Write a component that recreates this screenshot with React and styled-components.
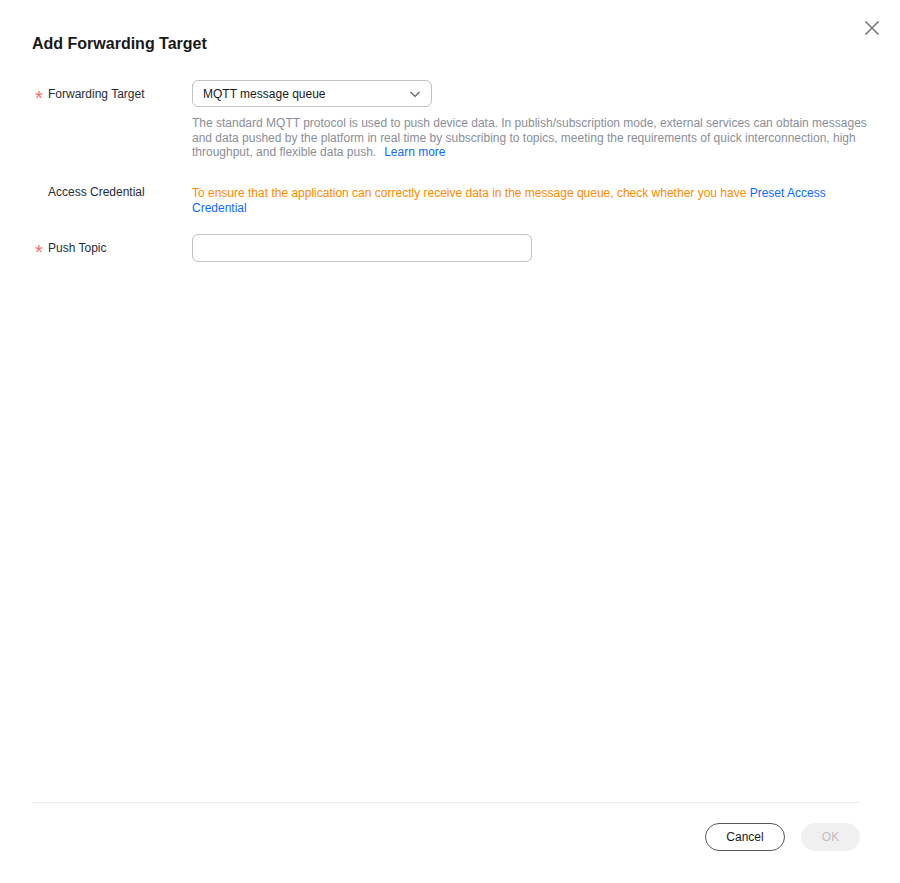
import React from "react";
import styled, { createGlobalStyle } from "styled-components";

const Global = createGlobalStyle`
  html, body { margin: 0; padding: 0; background: #fff; }
  body { font-family: "Liberation Sans", Arial, sans-serif; color: #252b3a; }
  * { box-sizing: border-box; }
`;

const Dialog = styled.div`
  position: relative;
  width: 900px;
  height: 883px;
  display: flex;
  flex-direction: column;
  background: #fff;
`;

const Header = styled.div`
  padding: 35px 32px 0 32px;
  height: 80px;
`;

const Title = styled.h2`
  margin: 0;
  font-size: 16px;
  font-weight: bold;
  color: #191919;
  line-height: 18px;
`;

const CloseBtn = styled.button`
  position: absolute;
  top: 20px;
  right: 20px;
  width: 16px;
  height: 16px;
  padding: 0;
  border: none;
  background: none;
  cursor: pointer;
  display: flex;
  align-items: center;
  justify-content: center;
`;

const Body = styled.div`
  flex: 1;
  padding: 0 32px 0 32px;
  display: flex;
  flex-direction: column;
`;

const Row = styled.div`
  display: flex;
  align-items: flex-start;
  margin-bottom: ${(p) => p.$mb || 0}px;
`;

const Label = styled.div`
  width: 160px;
  flex-shrink: 0;
  display: flex;
  align-items: center;
  padding-left: 3px;
  padding-top: ${(p) => p.$pt || 0}px;
  font-size: 12px;
  line-height: 14px;
  color: #252b3a;
`;

const Star = styled.span`
  display: inline-block;
  width: 13px;
  color: #f66f6a;
  font-size: 20px;
  line-height: 14px;
  transform: translateY(4px);
  visibility: ${(p) => (p.$show ? "visible" : "hidden")};
`;

const Control = styled.div`
  flex: 1;
  min-width: 0;
`;

const Select = styled.div`
  width: 240px;
  height: 27px;
  border: 1px solid #c2c2c2;
  border-radius: 6px;
  display: flex;
  align-items: center;
  justify-content: space-between;
  padding: 0 10px 0 10px;
  font-size: 12px;
  color: #191919;
`;

const Input = styled.div`
  width: 340px;
  height: 28px;
  border: 1px solid #c2c2c2;
  border-radius: 6px;
`;

const Help = styled.p`
  margin: 9px 0 0 0;
  font-size: 12px;
  line-height: 14.5px;
  color: #8a8e99;
`;

const Warn = styled.p`
  margin: 0;
  padding-top: 1px;
  font-size: 12px;
  line-height: 15px;
  color: #ff8a00;
`;

const Link = styled.a`
  color: #0d6bff;
  text-decoration: none;
  margin-left: ${(p) => p.$ml || 0}px;
`;

const Footer = styled.div`
  margin: 0 40px 0 32px;
  border-top: 1px solid #ececec;
  padding: 20px 0 32px 0;
  display: flex;
  justify-content: flex-end;
  gap: 16px;
`;

const Button = styled.button`
  height: 28px;
  width: ${(p) => p.$w}px;
  border-radius: 14px;
  font-family: "Liberation Sans", Arial, sans-serif;
  font-size: 12px;
  padding: 0;
  border: 1px solid ${(p) => (p.$disabled ? "#f0f0f0" : "#585858")};
  background: ${(p) => (p.$disabled ? "#f0f0f0" : "#fff")};
  color: ${(p) => (p.$disabled ? "#bebebe" : "#191919")};
  cursor: ${(p) => (p.$disabled ? "not-allowed" : "pointer")};
`;

export default function App() {
  return (
    <>
      <Global />
      <Dialog>
        <Header>
          <Title>Add Forwarding Target</Title>
        </Header>
        <CloseBtn aria-label="close">
          <svg width="16" height="16" viewBox="0 0 16 16">
            <path d="M1.5 1.5 L14.5 14.5 M14.5 1.5 L1.5 14.5" stroke="#7a7a7a" strokeWidth="1.6" fill="none" />
          </svg>
        </CloseBtn>
        <Body>
          <Row $mb={25}>
            <Label $pt={7}>
              <Star $show>*</Star>Forwarding Target
            </Label>
            <Control>
              <Select>
                <span>MQTT message queue</span>
                <svg width="12" height="12" viewBox="0 0 12 12">
                  <path d="M1.5 4 L6 8.5 L10.5 4" stroke="#575d6c" strokeWidth="1.2" fill="none" />
                </svg>
              </Select>
              <Help>
                The standard MQTT protocol is used to push device data. In publish/subscription mode, external services can obtain messages and data pushed by the platform in real time by subscribing to topics, meeting the requirements of quick interconnection, high throughput, and flexible data push.
                <Link href="#" $ml={8}>Learn more</Link>
              </Help>
            </Control>
          </Row>
          <Row $mb={18}>
            <Label>
              <Star>*</Star>Access Credential
            </Label>
            <Control>
              <Warn>
                To ensure that the application can correctly receive data in the message queue, check whether you have <Link href="#">Preset Access Credential</Link>
              </Warn>
            </Control>
          </Row>
          <Row>
            <Label $pt={7}>
              <Star $show>*</Star>Push Topic
            </Label>
            <Control>
              <Input />
            </Control>
          </Row>
        </Body>
        <Footer>
          <Button $w={80}>Cancel</Button>
          <Button $w={59} $disabled>OK</Button>
        </Footer>
      </Dialog>
    </>
  );
}
